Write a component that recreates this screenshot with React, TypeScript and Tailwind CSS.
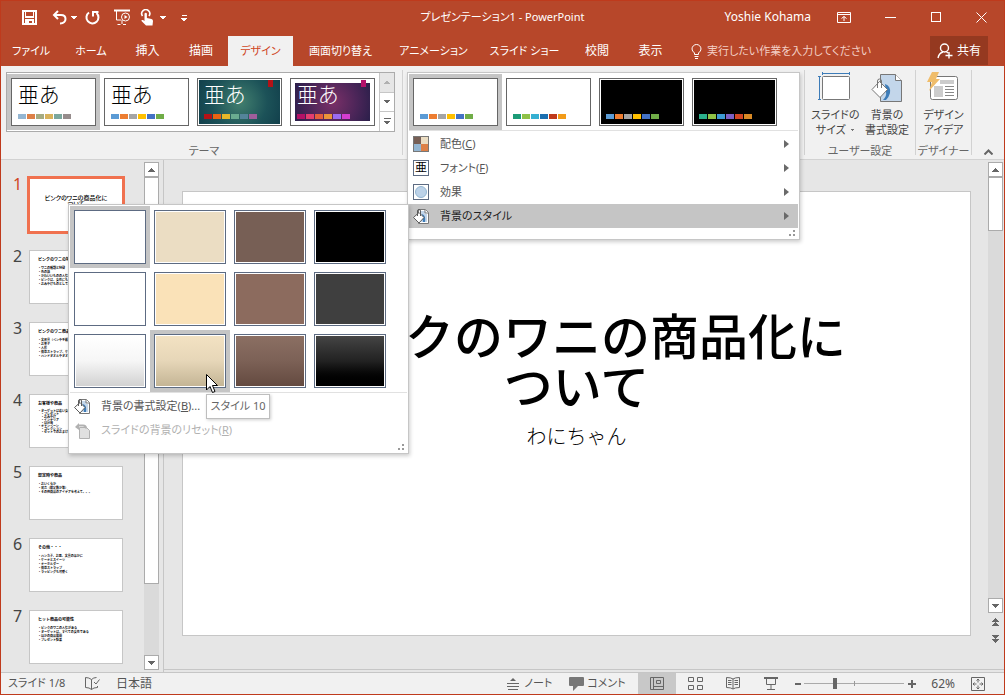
import React from 'react';

type ChipSet = string[];

const office: ChipSet = ['bg-[#5b9bd5]', 'bg-[#ed7d31]', 'bg-[#a5a5a5]', 'bg-[#ffc000]', 'bg-[#4472c4]', 'bg-[#70ad47]'];

const themes = [
  { name: 'テーマ 1', paper: 'bg-white', text: 'text-black', chips: ['bg-[#94b6d2]', 'bg-[#dd8047]', 'bg-[#a5ab81]', 'bg-[#d8b25c]', 'bg-[#7ba79d]', 'bg-[#968c8c]'] },
  { name: 'テーマ 2', paper: 'bg-white', text: 'text-black', chips: office },
  {
    name: 'テーマ 3',
    paper: 'bg-[radial-gradient(circle,#43806f,#1c5258_60%,#12404c)]',
    text: 'text-white',
    flag: 'bg-[#b31217]',
    chips: ['bg-[#b31217]', 'bg-[#ea6312]', 'bg-[#e6b729]', 'bg-[#6aac90]', 'bg-[#54849a]', 'bg-[#9e5e9b]'],
  },
  {
    name: 'テーマ 4',
    paper: 'bg-[radial-gradient(circle,#7b3068,#4a2558_60%,#2a1f4a)]',
    framed: true,
    text: 'text-white',
    flag: 'bg-[#b5106a]',
    chips: ['bg-[#b31166]', 'bg-[#e33d6f]', 'bg-[#e45f3c]', 'bg-[#e9943a]', 'bg-[#9b6bf2]', 'bg-[#d53dd0]'],
  },
];

const variants = [
  { name: 'バリエーション 1', paper: 'bg-white', chips: office },
  { name: 'バリエーション 2', paper: 'bg-white', chips: ['bg-[#1b9b77]', 'bg-[#8fc247]', 'bg-[#35b0d2]', 'bg-[#1b6fb0]', 'bg-[#c0391b]', 'bg-[#f29b18]'] },
  { name: 'バリエーション 3', paper: 'bg-black', chips: office },
  { name: 'バリエーション 4', paper: 'bg-black', chips: ['bg-[#2bb08a]', 'bg-[#8fc247]', 'bg-[#3d9ad4]', 'bg-[#7c5fc4]', 'bg-[#d04523]', 'bg-[#d98a26]'] },
];

const styles = [
  'bg-white',
  'bg-[#ebddc3]',
  'bg-[#775f55]',
  'bg-black',
  'bg-white',
  'bg-[#fae2b8]',
  'bg-[#8c6b5e]',
  'bg-[#3f3f3f]',
  'bg-linear-to-b from-white via-[#f6f6f6] to-[#d2d2d2]',
  'bg-linear-to-b from-[#f3e2c2] via-[#e6d6b8] to-[#c4b595]',
  'bg-linear-to-b from-[#8b6f63] via-[#7c6156] to-[#644a40]',
  'bg-linear-to-b from-[#454545] via-[#222222] to-black',
];

const tabs = [
  { label: 'ファイル', width: 'w-[60px] text-[11px]' },
  { label: 'ホーム', width: 'w-[60px] text-[11px]' },
  { label: '挿入', width: 'w-[53px] text-xs' },
  { label: '描画', width: 'w-[54px] text-xs' },
  { label: 'デザイン', width: 'w-[65px] text-[11px]', active: true },
  { label: '画面切り替え', width: 'w-[95px] text-[11px]' },
  { label: 'アニメーション', width: 'w-[91px] text-[11px]' },
  { label: 'スライド ショー', width: 'w-[91px] text-[11px]' },
  { label: '校閲', width: 'w-[54px] text-xs' },
  { label: '表示', width: 'w-[53px] text-xs' },
];

const slides = [
  { title: 'ピンクのワニの商品化について', lines: [] },
  { title: 'ピンクのワニの特徴とは', lines: ['・ワニの種類と特徴', '・色の話', '・かわいいものの人気について', '・ピンクは、女性にも人気がある', '・おみやげものとしての人気の高さ'] },
  { title: 'ピンクのワニ商品の案', lines: ['・文房具（ペンや手帳）', '・お菓子', '・人形', '・携帯ストラップ、ケース', '・ハンドタオルやタオル類など'] },
  { title: 'お客様や商品', small: true, lines: ['・ターゲットは若い女性', '　・プレゼント', '　・おみやげ', '　・インテリア', '　・自分用', '・キャンペーン', '　・コレクション', '　・セットでのおまけ'] },
  { title: '想定時や商品', lines: ['・おいくらか', '・発売（限定数か等）', '・その他商品のアイデアを考えて。。。'] },
  { title: 'その他・・・', lines: ['・ハンカチ、お皿、文具のほかに', '・ケーキとスイーツ', '・キーホルダー', '・携帯ストラップ', '・ラッピングも可愛く'] },
  { title: 'ヒット商品の可能性', lines: ['・ピンクのワニの人気がある', '・ターゲットは、すべての女性である', '・ほかの商品展開', '・プレゼント効果'] },
];

const Caret = ({ className = '' }: { className?: string }) => (
  <svg className={className} width="7" height="4" viewBox="0 0 7 4" fill="currentColor" shapeRendering="crispEdges">
    <path d="M0 0h7L3.500 4z" />
  </svg>
);

const PaintIcon = () => (
  <svg width="17" height="17" viewBox="0 0 17 17" className="shrink-0">
    <path d="M5.500 1.500h7l3 3v11h-10z" fill="#fff" stroke="#777" />
    <path d="M7 3h5v3h2v8H8z" fill="#c3d6ea" />
    <path d="M12 1.500V5h3.500" fill="#fff" stroke="#777" />
    <path d="M9 6q4 1 3 8h-2z" fill="#3d7cb8" />
    <path d="M6 4.500l5 5-5 5.500-5.500-5.500z" fill="#fff" stroke="#5a5a5a" />
    <path d="M4.500 8V3q0-1.500 1.500-1.500T7.500 3v5" fill="none" stroke="#5a5a5a" />
  </svg>
);

const Chips = ({ chips }: { chips: ChipSet }) => (
  <span className="flex gap-px">
    {chips.map((c, i) => (
      <span key={i} className={`h-[5px] w-2 ${c}`} />
    ))}
  </span>
);

type ThumbProps = { name: string; paper: string; chips: ChipSet; text?: string; flag?: string; framed?: boolean; selected?: boolean };

const Thumb = ({ name, paper, chips, text, flag, framed, selected }: ThumbProps) => (
  <button aria-label={name} className={`w-[93px] shrink-0 p-1 ${selected ? 'bg-[#c5c5c5]' : ''}`}>
    <span className="relative block h-12 border border-[#666] bg-white p-px">
      <span className={`block h-full ${framed ? 'p-[3px]' : ''}`}>
        <span className={`block h-full ${paper}`} />
      </span>
      {flag && <span className={`absolute top-px h-[7px] w-[5px] ${framed ? 'right-2' : 'right-2'} ${flag}`} />}
      <span className="absolute bottom-[6px] left-[6px]">
        {text && <span className={`mb-[9px] block text-left text-[21px] leading-[22px] font-light whitespace-nowrap ${text}`}>亜あ</span>}
        <Chips chips={chips} />
      </span>
    </span>
  </button>
);

const TitleBar = () => (
  <div className="grid h-[35px] grid-cols-[1fr_auto_1fr] items-center pb-[3px]">
    <div className="flex items-center pt-px pl-[21px]">
      <button aria-label="上書き保存">
        <svg width="15" height="15" viewBox="0 0 15 15" shapeRendering="crispEdges">
          <path d="M1 1h13v13H1zM3.500 1v6h8V1M4 14v-4h7v4" fill="none" stroke="#fff" strokeWidth="1.600" />
          <path d="M5 11h2v3H5z" fill="#fff" />
        </svg>
      </button>
      <button aria-label="元に戻す" className="ml-[15px]">
        <svg width="15" height="15" viewBox="0 0 15 15" fill="none" stroke="#fff" strokeWidth="2">
          <path d="M6 1L2 5l4 4M2.500 5H9q4.500 0 4.500 4T8 13.500" />
        </svg>
      </button>
      <Caret className="ml-[4px] w-[6px]" />
      <button aria-label="繰り返し" className="ml-2">
        <svg width="15" height="15" viewBox="0 0 15 15" fill="none" stroke="#fff" strokeWidth="2">
          <path d="M4 2.500A6 6 0 1 0 11.500 3M8 6.500V2h5.500" />
        </svg>
      </button>
      <button aria-label="スライドショーの開始" className="ml-[14px]">
        <svg width="17" height="17" viewBox="0 0 17 17" fill="none" stroke="#fff">
          <path d="M0 1.500h16" strokeWidth="2" />
          <path d="M2.500 2v9H7M8 11v4M3.500 15.500h3M9 15.500h3" />
          <circle cx="11.500" cy="8" r="4" />
          <path d="M10.500 6l3 2-3 2z" fill="#fff" stroke="none" />
        </svg>
      </button>
      <button aria-label="タッチ/マウス モードの切り替え" className="ml-[9px]">
        <svg width="14" height="17" viewBox="0 0 14 17">
          <path d="M2.500 7A4 4 0 1 1 9 7" fill="none" stroke="#fff" strokeWidth="1.600" />
          <path d="M4.500 4.500q1.200-1.500 2.400 0V9l4.600 1q1.500.500 1.500 2l-.500 4.500H6L1.500 12q-.500-1.500 1.500-1l1.500 1z" fill="#fff" />
        </svg>
      </button>
      <Caret className="ml-[6px] w-[6px]" />
      <button aria-label="クイック アクセス ツール バーのカスタマイズ" className="ml-[15px] flex flex-col items-center gap-[2px] pt-px">
        <span className="h-px w-[5px] bg-white" />
        <Caret className="w-[6px]" />
      </button>
    </div>
    <h1 className="text-[11px]">プレゼンテーション1 - PowerPoint</h1>
    <div className="flex items-center justify-end pr-[17px]">
      <span className="text-xs whitespace-nowrap">Yoshie Kohama</span>
      <button aria-label="リボンの表示オプション" className="ml-[26px]">
        <svg width="14" height="11" viewBox="0 0 14 11" fill="none" stroke="#fff">
          <path d="M.5.500h13v10H.500zM.500 2.500h13M7 9V4.500M4.500 6.500L7 4.500l2.500 2" />
        </svg>
      </button>
      <button aria-label="最小化" className="ml-[34px] h-px w-[11px] bg-white" />
      <button aria-label="最大化" className="ml-[35px] h-[10px] w-[10px] border border-white" />
      <button aria-label="閉じる" className="ml-[35px]">
        <svg width="11" height="11" viewBox="0 0 11 11" stroke="#fff">
          <path d="M.5.500l10 10M10.500.500l-10 10" />
        </svg>
      </button>
    </div>
  </div>
);

const TabRow = () => (
  <div className="flex h-[30px] text-xs">
    <nav className="flex">
      {tabs.map((t) => (
        <button key={t.label} className={`${t.width} whitespace-nowrap ${t.active ? 'bg-[#f1f1f1] text-[#d04525]' : ''}`}>
          {t.label}
        </button>
      ))}
    </nav>
    <label className="ml-[14px] flex min-w-0 flex-1 items-center gap-[5px] text-[11px]">
      <svg width="11" height="15" viewBox="0 0 11 15" fill="none" stroke="#fff">
        <path d="M3.500 10.500V9Q1 7 1 5a4.500 4.500 0 0 1 9 0q0 2-2.500 4v1.500zM3.500 12.500h4M4 14.500h3" />
      </svg>
      <input aria-label="操作アシスト" placeholder="実行したい作業を入力してください" className="min-w-0 flex-1 bg-transparent placeholder:text-[#f3cfc5] focus:outline-none" />
    </label>
    <button className="mr-4 mb-px flex w-[58px] items-center justify-center gap-1 bg-[#953920]">
      <svg width="16" height="16" viewBox="0 0 16 16" fill="none" stroke="#fff" strokeWidth="1.400">
        <circle cx="7.500" cy="5" r="4" />
        <path d="M1 15q1-5 5-6M9.500 9l1.500 1M8.500 12.500h7M12 9v6.500" />
      </svg>
      共有
    </button>
  </div>
);

const menuItems = [
  {
    label: '配色',
    keyName: 'C',
    icon: (
      <span className="grid h-4 w-4 grid-cols-2 border border-[#777]">
        <span className="bg-[#775f55]" />
        <span className="bg-[#ebddc3]" />
        <span className="bg-[#94b6d2]" />
        <span className="bg-[#dd8047]" />
      </span>
    ),
  },
  { label: 'フォント', keyName: 'F', icon: <span className="flex h-4 w-4 items-center justify-center border border-[#5d6b82] text-xs leading-3 text-black">亜</span> },
  {
    label: '効果',
    icon: (
      <span className="flex h-4 w-4 items-center justify-center border border-[#5d6b82]">
        <span className="h-3 w-3 rounded-full border border-[#94b6d2] bg-[#bcd2e8]" />
      </span>
    ),
  },
];

const MenuArrow = () => (
  <svg className="mr-[9px] ml-auto" width="5" height="8" viewBox="0 0 5 8" fill="#6a6a6a">
    <path d="M0 0l5 4-5 4z" />
  </svg>
);

const Grip = () => (
  <svg className="absolute right-1 bottom-[3px]" width="6" height="6" viewBox="0 0 6 6" fill="#999" shapeRendering="crispEdges">
    <path d="M4 0h2v2H4zM0 4h2v2H0zM4 4h2v2H4z" />
  </svg>
);

const StylesMenu = () => (
  <div className="absolute top-0 right-full w-[341px] border border-[#c6c6c6] bg-white p-px shadow-[1px_2px_4px_rgba(0,0,0,0.2)]">
    <div className="grid w-80 grid-cols-4">
      {styles.map((s, i) => (
        <div key={i} className="relative">
          <button aria-label={`スタイル ${i + 1}`} className={`block h-[62px] w-full p-1 ${i === 0 || i === 9 ? 'bg-[#c5c5c5]' : ''}`}>
            <span className="block h-full border border-[#5d6b82] bg-white p-px">
              <span className={`block h-full ${s}`} />
            </span>
          </button>
          {i === 9 && (
            <>
              <div role="tooltip" className="absolute top-16 left-14 z-20 flex h-[25px] w-16 items-center justify-center border border-[#bebebe] bg-white whitespace-nowrap text-[#666] shadow-[1px_1px_3px_rgba(0,0,0,0.2)]">
                スタイル 10
              </div>
              <svg className="absolute top-11 left-14 z-30" width="13" height="20" viewBox="0 0 13 20">
                <path d="M.5.500v15.500l3.500-3.500 2.500 6 2.500-1-2.500-6h5z" fill="#fff" stroke="#000" />
              </svg>
            </>
          )}
        </div>
      ))}
    </div>
    <div className="border-t border-[#e1e1e1] pt-px pb-[10px] text-[#555]">
      <button className="flex h-6 w-full items-center gap-[10px] pl-1">
        <PaintIcon />
        <span>
          背景の書式設定(<u>B</u>)...
        </span>
      </button>
      <button disabled className="flex h-6 w-full items-center gap-[10px] pl-1 text-[#b1b1b1]">
        <svg width="17" height="17" viewBox="0 0 17 17">
          <path d="M5.500 5.500h7l3 3v8h-10z" fill="#e0e0e0" stroke="#b1b1b1" />
          <path d="M1 5l4-4v7z" fill="#b1b1b1" />
          <path d="M4 3.500H9q3 0 3 3" fill="none" stroke="#b1b1b1" strokeWidth="2" />
        </svg>
        <span>
          スライドの背景のリセット(<u>R</u>)
        </span>
      </button>
    </div>
    <Grip />
  </div>
);

const VariantsMenu = () => (
  <div className="absolute inset-x-1 top-[2px] z-10 border border-[#c6c6c6] bg-white p-px shadow-[1px_2px_4px_rgba(0,0,0,0.2)]">
    <div className="mb-px flex border-b border-[#e1e1e1]">
      {variants.map((v, i) => (
        <Thumb key={v.name} {...v} selected={i === 0} />
      ))}
    </div>
    {menuItems.map((m) => (
      <button key={m.label} className="flex h-6 w-full items-center gap-[11px] pl-1 text-[#555]">
        {m.icon}
        <span>
          {m.label}
          {m.keyName && (
            <>
              (<u>{m.keyName}</u>)
            </>
          )}
        </span>
        <MenuArrow />
      </button>
    ))}
    <div className="relative mb-[10px]">
      <button className="flex h-6 w-full items-center gap-[10px] bg-[#c5c5c5] pl-1 text-[#222]">
        <PaintIcon />
        背景のスタイル
        <MenuArrow />
      </button>
      <StylesMenu />
    </div>
    <Grip />
  </div>
);

const BigButton = ({ icon, lines, caret }: { icon: React.ReactNode; lines: string[]; caret?: boolean }) => (
  <button className="flex flex-col items-center leading-[15px] whitespace-nowrap">
    <span className="mb-[3px] h-8">{icon}</span>
    <span>{lines[0]}</span>
    <span className="flex items-center gap-1">
      {lines[1]}
      {caret && <Caret className="w-[5px] text-[#777]" />}
    </span>
  </button>
);

const Ribbon = () => (
  <div className="relative z-10 flex h-[94px] border-b border-[#d2d2d2] bg-[#f1f1f1] py-1 text-[11px] text-[#444]">
    <section className="flex w-[402px] flex-col justify-between border-r border-[#d2d2d2] pt-[2px] pl-[5px]">
      <div className="flex h-[60px] w-[389px] border border-[#ababab] bg-white">
        <div className="flex flex-1 py-px">
          {themes.map((t, i) => (
            <Thumb key={t.name} {...t} selected={i === 0} />
          ))}
        </div>
        <div className="flex w-[15px] flex-col divide-y divide-[#c6c6c6] border-l border-[#c6c6c6] text-[#666]">
          <button aria-label="前の行" className="flex flex-1 items-center justify-center bg-[#e6e6e6] text-[#b1b1b1]">
            <Caret className="w-[6px] rotate-180" />
          </button>
          <button aria-label="次の行" className="flex flex-1 items-center justify-center">
            <Caret className="w-[6px]" />
          </button>
          <button aria-label="その他のテーマ" className="flex flex-1 flex-col items-center justify-center gap-[2px]">
            <span className="h-px w-[7px] bg-[#666]" />
            <Caret className="w-[6px]" />
          </button>
        </div>
      </div>
      <h2 className="text-center leading-[8px] text-[#666]">テーマ</h2>
    </section>
    <section className="relative flex-1">
      <VariantsMenu />
    </section>
    <section className="flex w-[111px] flex-col justify-between border-l border-[#d2d2d2] pt-[2px]">
      <div className="flex justify-between px-[6px]">
        <BigButton
          caret
          lines={['スライドの', 'サイズ']}
          icon={
            <svg width="40" height="30" viewBox="0 0 40 30" fill="none">
              <rect x="7.500" y="4.500" width="27" height="23" rx="1" fill="#fff" stroke="#777" />
              <path d="M7 1.500h28M7.500 0v3M34.500 0v3M4.500 4v24M3 4.500h3M3 27.500h3" stroke="#3d7cb8" />
            </svg>
          }
        />
        <BigButton
          lines={['背景の', '書式設定']}
          icon={
            <svg width="32" height="31" viewBox="0 0 32 31">
              <path d="M9.500 2.500h15l6 6v21h-21z" fill="#c3d6ea" stroke="#777" />
              <path d="M24.500 2.500v6h6" fill="#fff" stroke="#777" />
              <path d="M14 12q6 2 5 9-1 4-4 7h-3q4-4 3-8z" fill="#3d7cb8" />
              <path d="M8.500 9.500l8 8-7.500 8-8-8z" fill="#fff" stroke="#777" />
              <path d="M6.500 16V9q0-2 2-2t2 2v7" fill="none" stroke="#777" />
            </svg>
          }
        />
      </div>
      <h2 className="text-center leading-[8px] text-[#666]">ユーザー設定</h2>
    </section>
    <section className="flex w-14 flex-col items-center justify-between border-l border-[#d2d2d2] pt-[2px]">
      <BigButton
        lines={['デザイン', 'アイデア']}
        icon={
          <svg width="32" height="30" viewBox="0 0 32 30">
            <rect x="3.500" y="4.500" width="27" height="23" rx="2" fill="#fff" stroke="#777" />
            <path d="M13 8h14v4H13zM7 14h9v11H7z" fill="#ccc" />
            <path d="M18 14.500h9M18 17.500h9M18 20.500h9M18 23.500h9" stroke="#888" />
            <path d="M5 0h7L9 7h4L2 19l3-9H0z" fill="#f0bd6a" />
          </svg>
        }
      />
      <h2 className="leading-[8px] whitespace-nowrap text-[#666]">デザイナー</h2>
    </section>
    <div className="flex w-[33px] items-end justify-center border-l border-[#d2d2d2]">
      <button aria-label="リボンを折りたたむ">
        <svg width="9" height="6" viewBox="0 0 9 6" fill="none" stroke="#666" strokeWidth="2">
          <path d="M.5 5.500l4-4 4 4" />
        </svg>
      </button>
    </div>
  </div>
);

const ScrollBar = ({ thumb }: { thumb: string }) => (
  <div className="flex w-[15px] flex-1 flex-col bg-[#dadada] text-[#666]">
    <button aria-label="上へスクロール" className="flex h-[15px] items-center justify-center border border-[#ababab] bg-white">
      <Caret className="rotate-180" />
    </button>
    <div className={`border border-[#ababab] bg-white ${thumb}`} />
    <button aria-label="下へスクロール" className="mt-auto flex h-[15px] items-center justify-center border border-[#ababab] bg-white">
      <Caret />
    </button>
  </div>
);

const SlideList = () => (
  <aside className="flex border-r border-[#c6c6c6] pr-1">
    <ol className="flex w-[143px] flex-col gap-[18px] pt-[18px]">
      {slides.map((s, i) => (
        <li key={i} className="flex">
          <span className={`w-7 pl-3 text-base leading-3 ${i === 0 ? 'text-[#d04525]' : 'text-[#444]'}`}>{i + 1}</span>
          <button className={`block h-[54px] w-[94px] overflow-hidden bg-white text-left text-black ${i === 0 ? 'ring-2 ring-[#f0714f]' : 'border border-[#c6c6c6]'}`}>
            {i === 0 ? (
              <span className="block h-full border border-[#f0714f] px-3 pt-4 text-center text-[6px] leading-[6px] font-medium">{s.title}</span>
            ) : (
              <span className="block h-full pt-[6px] pl-2 whitespace-nowrap [font-feature-settings:normal]">
                <span className="mb-1 block text-[4px] leading-[5px] font-bold">{s.title}</span>
                {s.lines.map((l) => (
                  <span key={l} className={`block text-[3px] font-bold ${s.small ? 'leading-[3px]' : 'leading-[4px]'}`}>
                    {l}
                  </span>
                ))}
              </span>
            )}
          </button>
        </li>
      ))}
    </ol>
    <div className="flex py-[2px]">
      <ScrollBar thumb="h-[407px]" />
    </div>
  </aside>
);

const Editor = () => (
  <main className="flex min-w-0 flex-1 pt-[2px] pl-[18px]">
    <div className="mt-[29px] mb-[33px] flex min-w-0 flex-1 flex-col items-center border border-[#c6c6c6] bg-white pt-[119px] text-center text-black">
      <h2 className="text-[49px] leading-[50px] font-medium whitespace-nowrap [font-feature-settings:normal]">
        ピンクのワニの商品化に
        <br />
        ついて
      </h2>
      <p className="mt-[11px] text-[20px] font-light [font-feature-settings:normal]">わにちゃん</p>
    </div>
    <div className="mr-px ml-[17px] flex flex-col">
      <ScrollBar thumb="h-[54px]" />
      <div className="mt-[5px] mb-[26px] flex flex-col items-center gap-[9px] text-[#666]">
        <button aria-label="前のスライド" className="flex flex-col">
          <Caret className="rotate-180" />
          <Caret className="rotate-180" />
        </button>
        <button aria-label="次のスライド" className="flex flex-col">
          <Caret />
          <Caret />
        </button>
      </div>
    </div>
  </main>
);

const StatusBar = () => (
  <footer className="flex h-[22px] items-center border-t border-[#c6c6c6] bg-[#f1f1f1] pl-[7px] text-[11px] whitespace-nowrap text-[#555]">
    <span className="w-[76px]">スライド 1/8</span>
    <button aria-label="スペル チェック">
      <svg width="16" height="14" viewBox="0 0 16 14" fill="none" stroke="#666">
        <path d="M7.500 2.500Q5 .500 1.500.500v10q4 0 6 2 2-2 6-2V9M7.500 2.500v10M7.500 2.500q2-2 5-2M10 5l2 2 3.500-4.500" />
      </svg>
    </button>
    <span className="ml-4 text-xs">日本語</span>
    <button className="ml-auto flex w-[62px] items-center gap-[5px]">
      <svg width="12" height="12" viewBox="0 0 12 12" stroke="#666">
        <path d="M0 5.500h12M0 8.500h12M1 11.500h10" />
        <path d="M3 3h6L6 0z" fill="#666" stroke="none" />
      </svg>
      ノート
    </button>
    <button className="flex w-[69px] items-center gap-[3px]">
      <svg width="15" height="14" viewBox="0 0 15 14" fill="#777">
        <path d="M1 0h13q1 0 1 1v7q0 1-1 1H9l-5 5V9H1Q0 9 0 8V1q0-1 1-1z" />
      </svg>
      コメント
    </button>
    <button aria-label="標準" className="flex h-full w-[38px] items-center justify-center bg-[#c8c8c8]">
      <svg width="15" height="14" viewBox="0 0 15 14" fill="none" stroke="#666">
        <path d="M.5.500h13v12H.500zM3.500.500v12M3.500 9.500h10M6.500 3.500h4v3h-4z" />
      </svg>
    </button>
    <button aria-label="スライド一覧" className="flex w-[38px] items-center justify-center">
      <svg width="15" height="14" viewBox="0 0 15 14" fill="none" stroke="#666">
        <path d="M.5.500h5v4h-5zM9.500.500h5v4h-5zM.500 8.500h5v4h-5zM9.500 8.500h5v4h-5z" />
      </svg>
    </button>
    <button aria-label="閲覧表示" className="flex w-[38px] items-center justify-center">
      <svg width="14" height="13" viewBox="0 0 14 13" fill="none" stroke="#666">
        <path d="M7 2Q5 .500.500.500v10Q5 10.500 7 12q2-1.500 6.500-1.500V.500Q9 .500 7 2v10M2 3.500h3.500M2 5.500h3.500M2 7.500h3.500M8.500 3.500H12M8.500 5.500H12M8.500 7.500H12" />
      </svg>
    </button>
    <button aria-label="スライド ショー" className="flex w-[38px] items-center justify-center">
      <svg width="14" height="13" viewBox="0 0 14 13" fill="none" stroke="#666">
        <path d="M0 1h14" strokeWidth="2" />
        <path d="M2.500 2v5.500h9V2M7 8v4M3 12.500h8" />
      </svg>
    </button>
    <button aria-label="縮小" className="ml-[5px] h-[2px] w-[6px] bg-[#666]" />
    <div className="relative ml-[3px] flex items-center">
      <span className="absolute left-[50px] h-[5px] w-px bg-[#999]" />
      <input
        type="range"
        aria-label="ズーム"
        defaultValue={30}
        className="h-3 w-[100px] appearance-none bg-[linear-gradient(#aaa,#aaa)] bg-[length:100%_1px] bg-center bg-no-repeat [&::-webkit-slider-thumb]:h-[11px] [&::-webkit-slider-thumb]:w-1 [&::-webkit-slider-thumb]:appearance-none [&::-webkit-slider-thumb]:bg-[#666]"
      />
    </div>
    <button aria-label="拡大" className="ml-[4px]">
      <svg width="8" height="8" viewBox="0 0 8 8" stroke="#666" strokeWidth="2">
        <path d="M0 4h8M4 0v8" />
      </svg>
    </button>
    <span className="ml-[15px] text-xs">62%</span>
    <button aria-label="ウィンドウに合わせる" className="mr-[19px] ml-4">
      <svg width="14" height="14" viewBox="0 0 14 14" fill="none" stroke="#666">
        <path d="M.5.500h13v13H.500zM7 2v3.500M5.500 3.500L7 2l1.500 1.500M7 12V8.500M5.500 10.500L7 12l1.500-1.500M2 7h3.500M3.500 5.500L2 7l1.500 1.500M12 7H8.500M10.500 5.500L12 7l-1.500 1.500" />
      </svg>
    </button>
  </footer>
);

const App: React.FC = () => {
  return (
    <div className="flex h-screen flex-col overflow-hidden border border-[#bf3a1c] bg-[#e6e6e6] font-['Noto_Sans','Noto_Sans_CJK_JP',sans-serif] [font-feature-settings:'palt']">
      <header className="bg-[#b7472a] text-white">
        <TitleBar />
        <TabRow />
      </header>
      <Ribbon />
      <div className="flex min-h-0 flex-1">
        <SlideList />
        <div className="mb-[2px] flex min-w-0 flex-1 border-b border-[#c6c6c6]">
          <Editor />
        </div>
      </div>
      <StatusBar />
    </div>
  );
};

export default App;
